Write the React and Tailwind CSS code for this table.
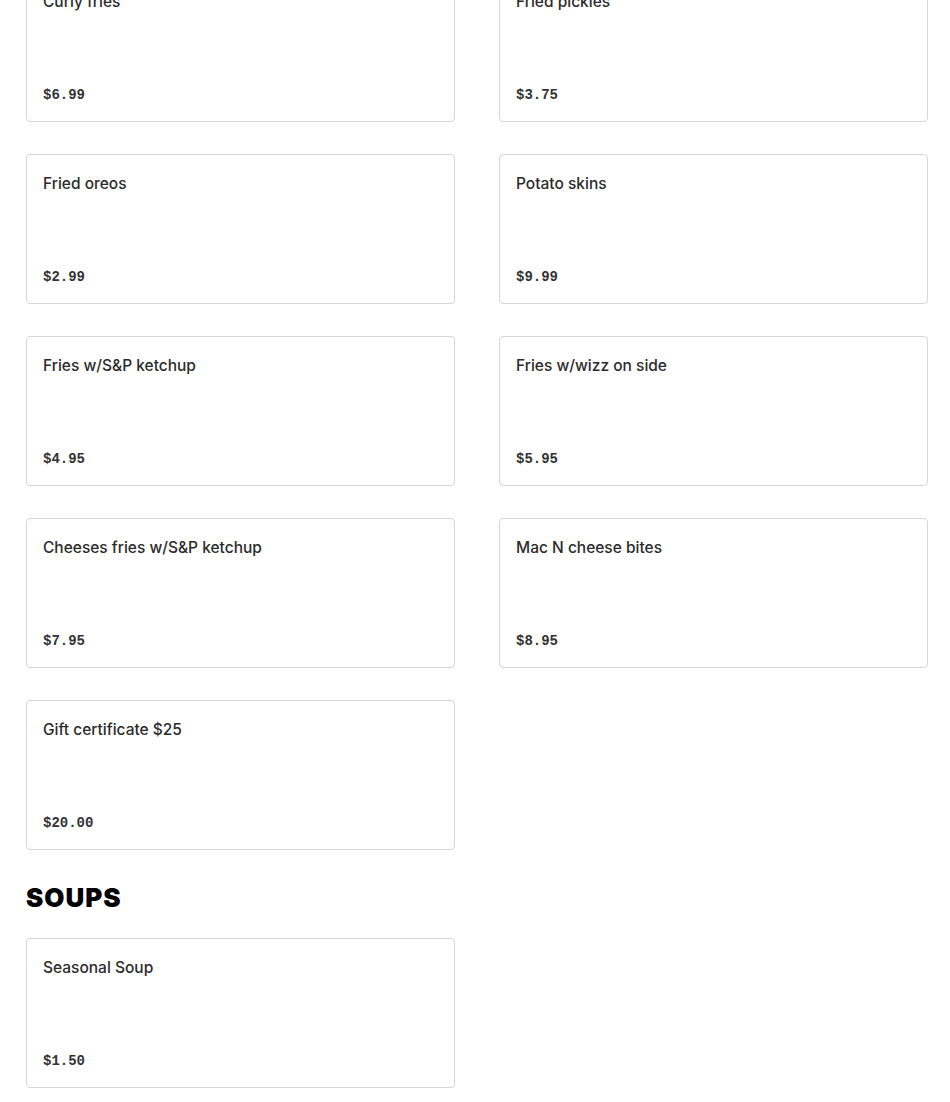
import React from 'react'

const sides = [
  { name: 'Curly fries', price: '$6.99' },
  { name: 'Fried pickles', price: '$3.75' },
  { name: 'Fried oreos', price: '$2.99' },
  { name: 'Potato skins', price: '$9.99' },
  { name: 'Fries w/S&P ketchup', price: '$4.95' },
  { name: 'Fries w/wizz on side', price: '$5.95' },
  { name: 'Cheeses fries w/S&P ketchup', price: '$7.95' },
  { name: 'Mac N cheese bites', price: '$8.95' },
  { name: 'Gift certificate $25', price: '$20.00' },
]

const soups = [{ name: 'Seasonal Soup', price: '$1.50' }]

function ItemCard({ item }) {
  return (
    <div className="h-[150px] bg-white border border-[#d6d6d6] rounded-[4px] p-4 flex flex-col justify-between">
      <div className="mt-px text-[15.5px] leading-6 font-medium text-[#2b2b2b] font-['Inter',sans-serif]">
        {item.name}
      </div>
      <div className="text-[14px] leading-5 font-bold text-[#333] font-['Liberation_Mono',monospace]">
        {item.price}
      </div>
    </div>
  )
}

export default function App() {
  return (
    <div className="bg-white min-h-[1102px] overflow-hidden">
      <div className="mt-[-28px] pl-[26px] w-[928px]">
        <div className="grid grid-cols-2 gap-x-[44px] gap-y-8">
          {sides.map((item) => (
            <ItemCard key={item.name} item={item} />
          ))}
        </div>

        <h2 className="mt-[34px] mb-[26px] text-[26px] leading-7 font-black tracking-[1px] text-black font-['Inter',sans-serif] uppercase">
          Soups
        </h2>

        <div className="grid grid-cols-2 gap-x-[44px] gap-y-8">
          {soups.map((item) => (
            <ItemCard key={item.name} item={item} />
          ))}
        </div>
      </div>
    </div>
  )
}
